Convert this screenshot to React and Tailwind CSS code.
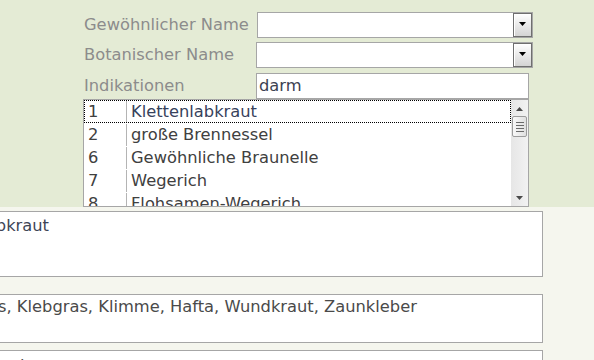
import React from "react";

const rows = [
  { id: "1", name: "Klettenlabkraut", focus: true },
  { id: "2", name: "große Brennessel" },
  { id: "6", name: "Gewöhnliche Braunelle" },
  { id: "7", name: "Wegerich" },
  { id: "8", name: "Flohsamen-Wegerich" },
];

function Arrow({ up, color = "#000" }) {
  return (
    <svg width="7" height="4" viewBox="0 0 7 4">
      <polygon points={up ? "0,4 7,4 3.5,0" : "0,0 7,0 3.5,4"} fill={color} />
    </svg>
  );
}

function Combo({ width }) {
  return (
    <div className={`flex h-[26px] justify-end border border-[#a6a6a6] bg-white ${width}`}>
      <div className="flex w-[19px] items-start justify-center border border-[#6f6f6f] bg-gradient-to-b from-[#ffffff] to-[#d4d4d4] pt-[8px] shadow-[inset_1px_1px_0_#fff]">
        <Arrow />
      </div>
    </div>
  );
}

export default function App() {
  return (
    <div className="flex h-[360px] w-[594px] flex-col overflow-hidden font-['DejaVu_Sans',sans-serif] text-[16.3px]">
      <section className="h-[207px] shrink-0 bg-[#e4ebd5] pl-[83px] pt-[12px]">
        <div className="flex h-[26px] items-center">
          <span className="w-[174px] pl-[1px] text-[#8c8c8c]">Gewöhnlicher Name</span>
          <Combo width="w-[276px]" />
        </div>
        <div className="mt-[4px] flex h-[26px] items-center">
          <span className="w-[173px] pl-[1px] text-[#8c8c8c]">Botanischer Name</span>
          <Combo width="w-[277px]" />
        </div>
        <div className="mt-[5px] flex h-[26px] items-center">
          <span className="w-[173px] pl-[1px] text-[#8c8c8c]">Indikationen</span>
          <div className="flex h-[26px] w-[273px] items-center border border-[#a6a6a6] bg-white pl-[2px] text-[#3c4252]">
            darm
          </div>
        </div>
        <div className="flex h-[108px] w-[446px] border border-[#a6a6a6] bg-white">
          <div className="flex-1 overflow-hidden">
            {rows.map((r) => (
              <div
                key={r.id}
                className={`flex h-[23px] items-center pt-[1px] ${r.focus ? "outline-1 -outline-offset-1 outline-dotted outline-black" : ""}`}
              >
                <span className="w-[42px] shrink-0 pl-[4px] text-[#404040]">{r.id}</span>
                <span className={`flex h-full items-center whitespace-nowrap border-l border-[#b4b4b4] pl-[4px] ${r.focus ? "text-[#37425c]" : "text-[#404040]"}`}>
                  {r.name}
                </span>
              </div>
            ))}
          </div>
          <div className="flex w-[17px] shrink-0 flex-col bg-gradient-to-r from-[#e6e6e6] to-[#f2f2f2]">
            <div className="flex h-[16px] items-center justify-center pt-[1px]">
              <Arrow up color="#4a4a4a" />
            </div>
            <div className="mx-[1px] flex h-[21px] flex-col items-center justify-center gap-[2px] rounded-[2px] border border-[#9c9c9c] bg-gradient-to-r from-[#f8f8f8] to-[#e0e0e0]">
              <div className="h-px w-[8px] bg-[#6a6a6a]" />
              <div className="h-px w-[8px] bg-[#6a6a6a]" />
              <div className="h-px w-[8px] bg-[#6a6a6a]" />
              <div className="h-px w-[8px] bg-[#6a6a6a]" />
            </div>
            <div className="flex-1" />
            <div className="flex h-[16px] items-center justify-center">
              <Arrow color="#4a4a4a" />
            </div>
          </div>
        </div>
      </section>

      <section className="flex-1 bg-[#f5f6ee] pt-[4px]">
        <div className="-ml-[2px] h-[66px] w-[545px] overflow-hidden border border-[#a6a6a6] bg-white pt-[2px] text-[#3d4556]">
          <div className="-ml-[76px] whitespace-nowrap">Klettenlabkraut</div>
        </div>
        <div className="-ml-[2px] mt-[17px] h-[49px] w-[545px] overflow-hidden border border-[#a6a6a6] bg-white text-[#4a4a4a]">
          <div className="-ml-[1px] whitespace-nowrap">s, Klebgras, Klimme, Hafta, Wundkraut, Zaunkleber</div>
        </div>
        <div className="-ml-[2px] mt-[7px] h-[40px] w-[545px] overflow-hidden border border-[#a6a6a6] bg-white pt-[3px] text-[#4a4a4a]">
          <div className="-ml-[79px] whitespace-nowrap">Galium aparine</div>
        </div>
      </section>
    </div>
  );
}
